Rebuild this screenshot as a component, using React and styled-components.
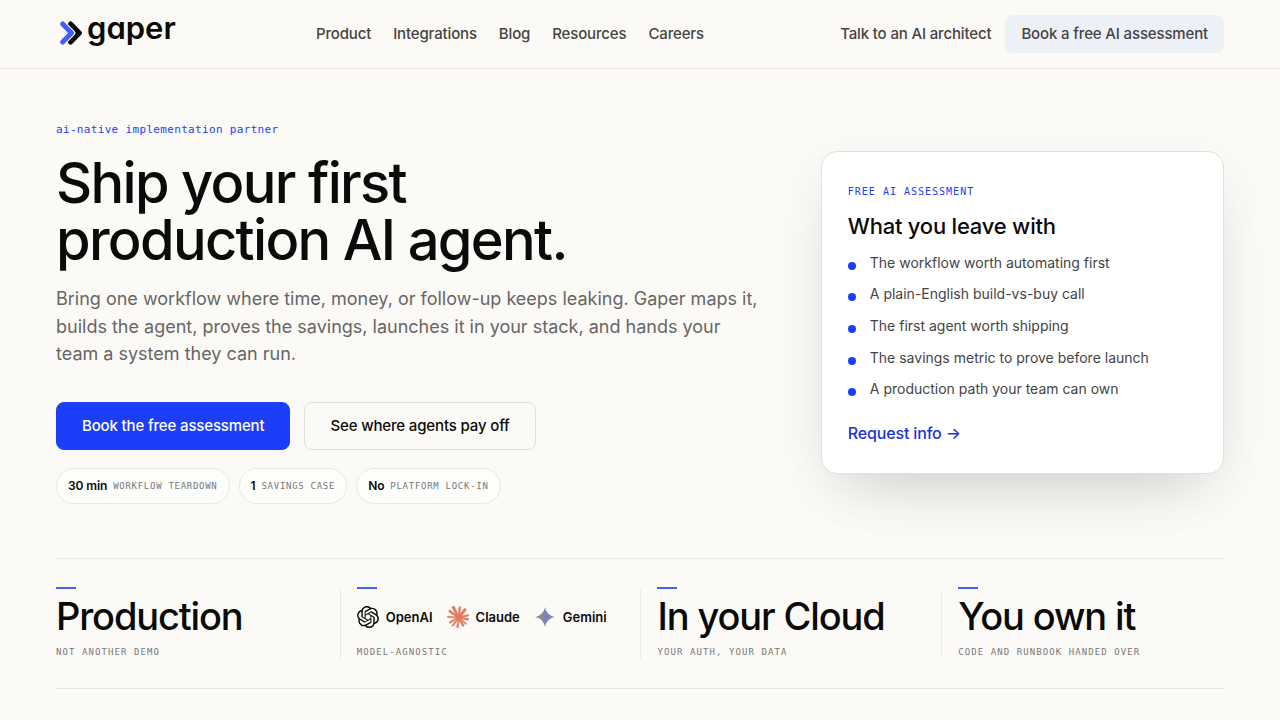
import React from "react"
import styled, { createGlobalStyle } from "styled-components"
import { SiOpenai, SiClaude } from "react-icons/si"

const sans = `Inter, "Liberation Sans", sans-serif`
const mono = `"DejaVu Sans Mono", "Liberation Mono", monospace`

const navLinks = ["Product", "Integrations", "Blog", "Resources", "Careers"]

const proofs = [
  { value: "30 min", label: "Workflow teardown" },
  { value: "1", label: "Savings case" },
  { value: "No", label: "Platform lock-in" },
]

const takeaways = [
  "The workflow worth automating first",
  "A plain-English build-vs-buy call",
  "The first agent worth shipping",
  "The savings metric to prove before launch",
  "A production path your team can own",
]

const GlobalStyle = createGlobalStyle`
  *, *::before, *::after {
    box-sizing: border-box;
  }
  body {
    margin: 0;
    background: #fcfaf6;
    color: #0a0a0a;
    font-family: ${sans};
    -webkit-font-smoothing: antialiased;
  }
  a {
    color: inherit;
    text-decoration: none;
  }
  h1, h2, p, ul {
    margin: 0;
    padding: 0;
  }
`

const Header = styled.header`
  display: flex;
  align-items: center;
  justify-content: space-between;
  padding: 15px 56px;
  border-bottom: 1px solid #e8e6df;
`

const Logo = styled.a`
  display: flex;
  align-items: center;
  gap: 4px;
  padding: 0 4px;
`

const LogoMark = styled.svg`
  display: block;
  width: 23px;
  height: 24px;
  margin-bottom: 3px;
`

const Wordmark = styled.span`
  padding-bottom: 12px;
  font-size: 31px;
  line-height: 20px;
  font-weight: 600;
  font-feature-settings: "cv11";
`

const Nav = styled.nav`
  display: flex;
  gap: 22px;
`

const NavLink = styled.a`
  font-size: 15px;
  line-height: 22px;
  font-weight: 500;
  letter-spacing: -0.01em;
  color: #444;
`

const HeaderActions = styled.div`
  display: flex;
  align-items: center;
  gap: 14px;
`

const HeaderButton = styled(NavLink)`
  padding: 8px 16px;
  border-radius: 8px;
  background: #eef0f8;
`

const Hero = styled.section`
  display: grid;
  grid-template-columns: 64fr 36fr;
  align-items: center;
  gap: 48px;
  padding: 52px 56px 54px;
`

const Eyebrow = styled.p`
  font-family: ${mono};
  font-size: 11px;
  line-height: 18px;
  letter-spacing: 0.03em;
  color: #1c3ef9;
`

const Title = styled.h1`
  margin-top: 16px;
  font-size: 56px;
  line-height: 57px;
  font-weight: 500;
  letter-spacing: -0.03em;
`

const Lead = styled.p`
  max-width: 708px;
  margin-top: 16px;
  font-size: 18px;
  line-height: 1.53;
  color: #666;
`

const Actions = styled.div`
  display: flex;
  flex-wrap: wrap;
  gap: 14px;
  margin-top: 34px;
`

const Button = styled.a`
  padding: 12px 25px;
  border: 1px solid ${(p) => (p.$primary ? "#1c3ef9" : "#e1e0db")};
  border-radius: 8px;
  background: ${(p) => (p.$primary ? "#1c3ef9" : "transparent")};
  font-size: 15px;
  line-height: 22px;
  font-weight: 500;
  letter-spacing: -0.01em;
  color: ${(p) => (p.$primary ? "#fff" : "#0a0a0a")};
`

const Proofs = styled.ul`
  display: flex;
  flex-wrap: wrap;
  gap: 9px;
  margin-top: 18px;
  list-style: none;
`

const Proof = styled.li`
  display: flex;
  align-items: center;
  gap: 6px;
  padding: 8px 11px;
  border: 1px solid #e9e8e2;
  border-radius: 18px;
  background: #fdfdfb;
  font-size: 12px;
  line-height: 18px;
  letter-spacing: -0.01em;

  strong {
    font-weight: 600;
  }
`

const Caption = styled.span`
  font-family: ${mono};
  font-size: 9px;
  line-height: 12px;
  letter-spacing: ${(p) => (p.$wide ? "0.12em" : "0.08em")};
  text-transform: uppercase;
  color: #777;
`

const Card = styled.aside`
  padding: 32px 26px 28px;
  border: 1px solid #e1e0db;
  border-radius: 16px;
  background: #fff;
  box-shadow: 0 30px 60px -30px rgba(10, 10, 10, 0.18), 0 16px 60px rgba(10, 10, 10, 0.05);
`

const CardEyebrow = styled.p`
  font-family: ${mono};
  font-size: 10px;
  line-height: 16px;
  letter-spacing: 0.1em;
  text-transform: uppercase;
  color: #1c3ef9;
`

const CardTitle = styled.h2`
  margin-top: 12px;
  font-size: 22px;
  line-height: 28px;
  font-weight: 500;
  letter-spacing: -0.01em;
`

const List = styled.ul`
  display: grid;
  gap: 10px;
  margin-top: 12px;
  list-style: none;
`

const ListItem = styled.li`
  display: flex;
  gap: 14px;
  font-size: 14px;
  line-height: 1.55;
  color: #444;

  &::before {
    content: "";
    flex: none;
    width: 8px;
    height: 8px;
    margin-top: 10px;
    border-radius: 50%;
    background: #1c3ef9;
  }
`

const CardLink = styled.a`
  display: inline-block;
  margin-top: 21px;
  font-size: 16px;
  line-height: 24px;
  font-weight: 500;
  letter-spacing: -0.01em;
  color: #1a35d6;
`

const Stats = styled.section`
  display: grid;
  grid-template-columns: repeat(3, 285fr) 266fr;
  gap: 16px;
  margin: 0 56px;
  padding: 28px 0 30px;
  border: solid #e9e8e2;
  border-width: 1px 0;
`

const Stat = styled.div`
  display: flex;
  flex-direction: column;
  gap: 1px;

  &::before {
    content: "";
    width: 20px;
    height: 2px;
    background: #4460f2;
  }
`

const StatBody = styled.div`
  display: flex;
  flex-direction: column;
  gap: 4px;
  border-right: 1px solid #e9e8e2;

  ${Stat}:last-child & {
    border-right: 0;
  }
`

const StatValue = styled.p`
  display: flex;
  align-items: center;
  gap: 14px;
  height: 52px;
  font-size: 38px;
  line-height: 52px;
  font-weight: 500;
  letter-spacing: -0.03em;
`

const Model = styled.span`
  display: flex;
  align-items: center;
  gap: 7px;
  padding-top: 2px;
  font-size: 13px;
  line-height: 20px;
  font-weight: 600;
  letter-spacing: 0;
`

const ChevronMark = () => (
  <LogoMark viewBox="0 0 23 24" fill="none" strokeLinecap="round" strokeLinejoin="round" aria-hidden="true">
    <path d="M10.6 3 19.4 12 10.6 21" stroke="#0a0a0a" strokeWidth="5" />
    <path d="M2.7 3 11.5 12 2.7 21" stroke="#fcfaf6" strokeWidth="7" />
    <path d="M2.7 3 11.5 12 2.7 21" stroke="#4460f2" strokeWidth="5" />
  </LogoMark>
)

const GeminiMark = () => (
  <svg width="22" height="22" viewBox="0 0 22 22" aria-hidden="true">
    <defs>
      <linearGradient id="gemini" x1="0" y1="0" x2="1" y2="0">
        <stop offset="0.3" stopColor="#8d8d8d" />
        <stop offset="0.6" stopColor="#7580c8" />
        <stop offset="0.9" stopColor="#8d8d94" />
      </linearGradient>
    </defs>
    <path
      d="M11 1C12 6.5 15.5 10 21 11 15.5 12 12 15.5 11 21 10 15.5 6.5 12 1 11 6.5 10 10 6.5 11 1Z"
      fill="url(#gemini)"
    />
  </svg>
)

const StatCell = ({ children, label }) => (
  <Stat>
    <StatBody>
      <StatValue>{children}</StatValue>
      <Caption $wide>{label}</Caption>
    </StatBody>
  </Stat>
)

const App = () => {
  return (
    <>
      <GlobalStyle />
      <Header>
        <Logo href="#">
          <ChevronMark />
          <Wordmark>gaper</Wordmark>
        </Logo>
        <Nav>
          {navLinks.map((l) => (
            <NavLink key={l} href="#">
              {l}
            </NavLink>
          ))}
        </Nav>
        <HeaderActions>
          <NavLink href="#">Talk to an AI architect</NavLink>
          <HeaderButton href="#">Book a free AI assessment</HeaderButton>
        </HeaderActions>
      </Header>
      <main>
        <Hero>
          <div>
            <Eyebrow>ai-native implementation partner</Eyebrow>
            <Title>
              Ship your first
              <br />
              production AI agent.
            </Title>
            <Lead>
              Bring one workflow where time, money, or follow-up keeps leaking. Gaper maps it, builds the agent, proves
              the savings, launches it in your stack, and hands your team a system they can run.
            </Lead>
            <Actions>
              <Button href="#" $primary>
                Book the free assessment
              </Button>
              <Button href="#">See where agents pay off</Button>
            </Actions>
            <Proofs>
              {proofs.map((p) => (
                <Proof key={p.label}>
                  <strong>{p.value}</strong>
                  <Caption>{p.label}</Caption>
                </Proof>
              ))}
            </Proofs>
          </div>
          <Card>
            <CardEyebrow>Free AI assessment</CardEyebrow>
            <CardTitle>What you leave with</CardTitle>
            <List>
              {takeaways.map((t) => (
                <ListItem key={t}>{t}</ListItem>
              ))}
            </List>
            <CardLink href="#">Request info →</CardLink>
          </Card>
        </Hero>
        <Stats>
          <StatCell label="Not another demo">Production</StatCell>
          <StatCell label="Model-agnostic">
            <Model>
              <SiOpenai size={22} /> OpenAI
            </Model>
            <Model>
              <SiClaude size={22} color="#de7d5f" strokeWidth={0.6} /> Claude
            </Model>
            <Model>
              <GeminiMark /> Gemini
            </Model>
          </StatCell>
          <StatCell label="Your auth, your data">In your Cloud</StatCell>
          <StatCell label="Code and runbook handed over">You own it</StatCell>
        </Stats>
      </main>
    </>
  )
}

export default App
